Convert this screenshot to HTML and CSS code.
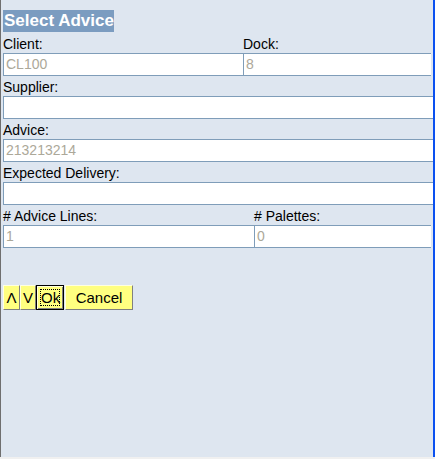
FILE: index.html
```html
<!DOCTYPE html>
<html>
<head>
<meta charset="utf-8">
<link rel="stylesheet" href="styles.css">
</head>
<body>
<div class="frame">
  <div class="title"><span>Select Advice</span></div>
  <div class="row split1">
    <div class="cell"><div class="lbl">Client:</div><div class="inp">CL100</div></div>
    <div class="cell"><div class="lbl">Dock:</div><div class="inp">8</div></div>
  </div>
  <div class="row full">
    <div class="cell"><div class="lbl">Supplier:</div><div class="inp"></div></div>
  </div>
  <div class="row full">
    <div class="cell"><div class="lbl">Advice:</div><div class="inp">213213214</div></div>
  </div>
  <div class="row full">
    <div class="cell"><div class="lbl">Expected Delivery:</div><div class="inp"></div></div>
  </div>
  <div class="row split2">
    <div class="cell"><div class="lbl"># Advice Lines:</div><div class="inp">1</div></div>
    <div class="cell"><div class="lbl"># Palettes:</div><div class="inp">0</div></div>
  </div>
  <div class="buttons">
    <div class="btn up">&Lambda;</div>
    <div class="btn down">V</div>
    <div class="btn ok"><span class="focus">Ok</span></div>
    <div class="btn cancel">Cancel</div>
  </div>
</div>
</body>
</html>
```
FILE: styles.css
```css
html, body {
  margin: 0;
  padding: 0;
  background: #f0f0f0;
}
body {
  width: 435px;
  height: 459px;
  overflow: hidden;
  font-family: "Liberation Sans", Arial, sans-serif;
}
.frame {
  box-sizing: border-box;
  width: 435px;
  height: 457px;
  background: #dee6f0;
  border-left: 1px solid #6f6f6f;
  border-right: 2px solid #0a50f0;
  padding: 10px 0 0 2px;
}
.title {
  height: 23px;
}
.title span {
  display: inline-block;
  background: #7b9cc0;
  color: #ffffff;
  font-weight: bold;
  font-size: 17px;
  line-height: 22px;
  height: 22px;
  padding: 0 0 0 1px;
}
.row {
  display: grid;
}
.split1 {
  grid-template-columns: 240px 188px;
}
.split2 {
  grid-template-columns: 251px 177px;
}
.full {
  grid-template-columns: 430px;
}
.lbl {
  height: 20px;
  box-sizing: border-box;
  padding-top: 3px;
  font-size: 14px;
  line-height: 16px;
  color: #000;
}
.inp {
  box-sizing: border-box;
  height: 23px;
  background: #ffffff;
  border-top: 1px solid #7f9db9;
  border-bottom: 1px solid #7f9db9;
  border-left: 1px solid #7f9db9;
  padding-left: 2px;
  font-size: 14px;
  line-height: 21px;
  color: #aca899;
}
.buttons {
  display: flex;
  margin-top: 37px;
  height: 25px;
}
.btn {
  box-sizing: border-box;
  height: 25px;
  background: #ffff80;
  border-top: 1px solid #ffffe0;
  border-left: 1px solid #ffffe0;
  border-right: 1px solid #808080;
  border-bottom: 1px solid #808080;
  font-size: 15px;
  line-height: 23px;
  text-align: center;
  color: #000;
}
.up { width: 17px; }
.down { width: 16px; }
.ok {
  width: 28px;
  border: 1px solid #000;
  box-shadow: inset 1px 1px 0 #ffffe0, inset -1px -1px 0 #808080;
  padding: 3px 3px;
  line-height: 17px;
}
.focus {
  display: block;
  height: 17px;
  border: 1px dotted #000;
  box-sizing: border-box;
  line-height: 15px;
}
.cancel {
  width: 68px;
  margin-left: 1px;
}
```
